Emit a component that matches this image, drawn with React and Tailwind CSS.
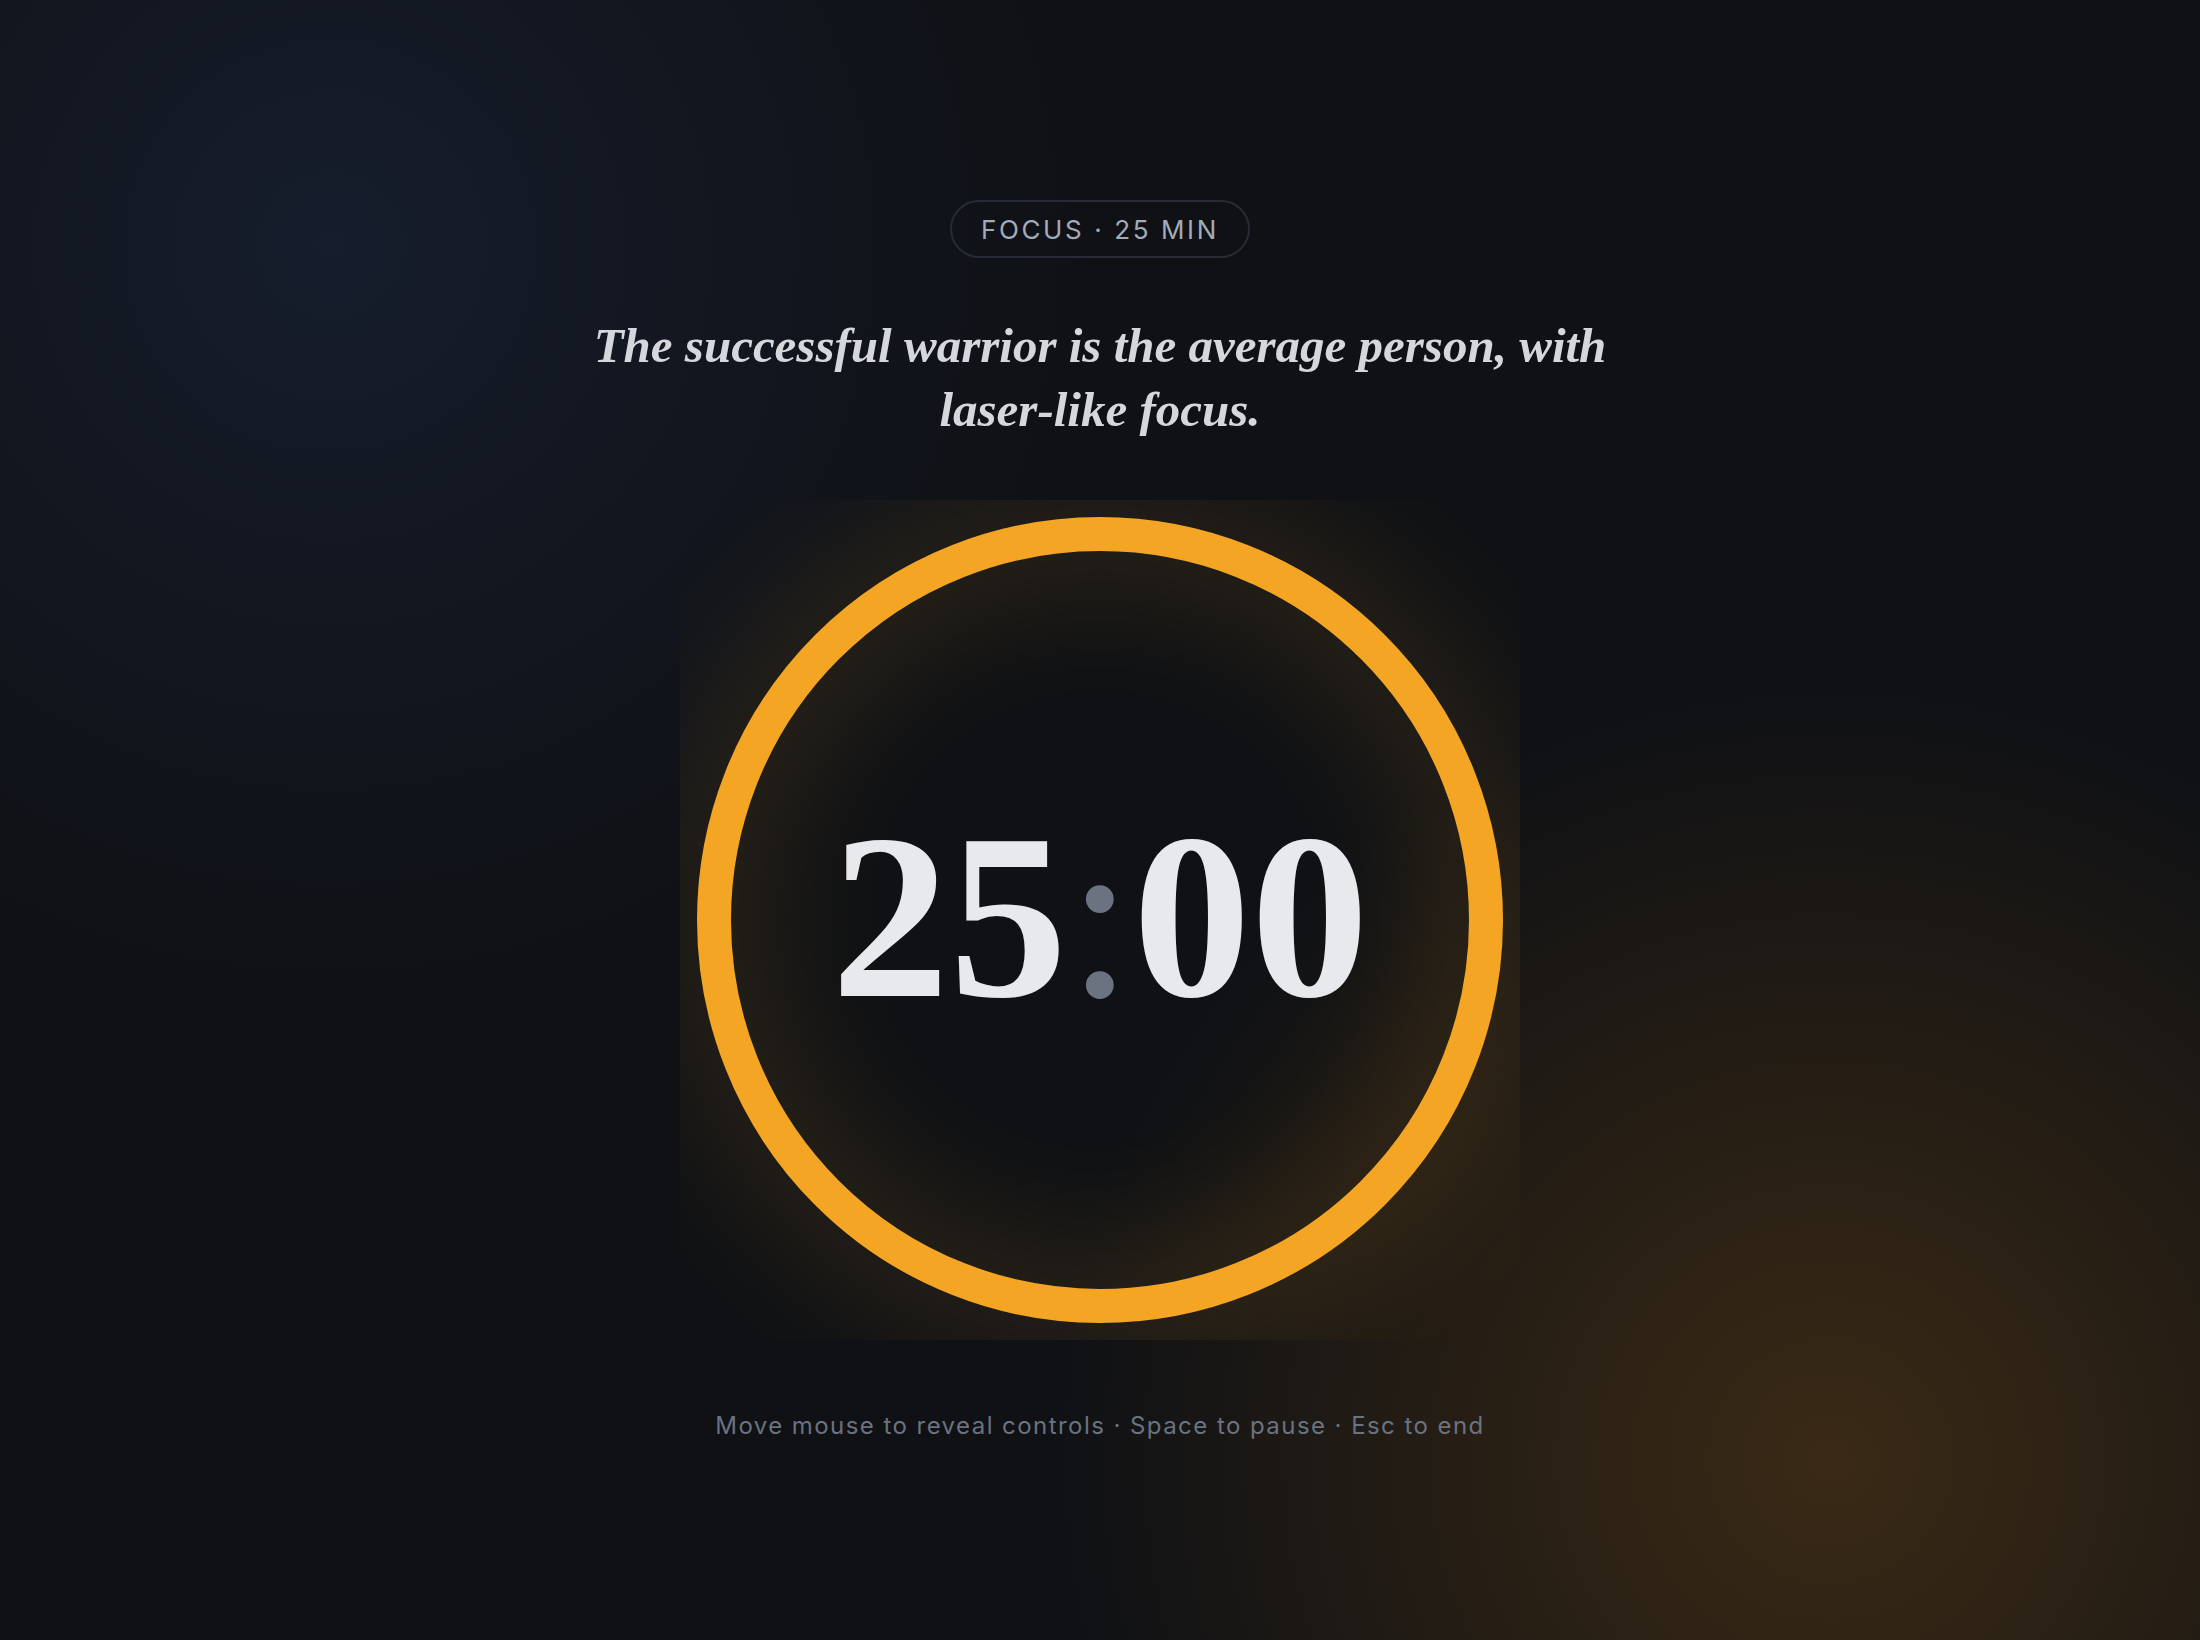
export default function App() {
  return (
    <div className="relative min-h-screen w-full overflow-hidden bg-[#0f1115] font-['Inter','Liberation_Sans',sans-serif]">
      {/* background glows */}
      <div className="pointer-events-none absolute inset-0 bg-[radial-gradient(circle_760px_at_330px_245px,#161d2c_0%,rgba(22,29,44,0.55)_40%,rgba(15,17,21,0)_100%)]" />
      <div className="pointer-events-none absolute inset-0 bg-[radial-gradient(circle_780px_at_1830px_1460px,#3a2a16_0%,rgba(52,38,20,0.7)_40%,rgba(15,17,21,0)_100%)]" />

      <main className="relative flex flex-col items-center pt-[200px]">
        <div className="flex h-[58px] items-center rounded-full border-2 border-[#262b35] px-[29px] text-[26px] uppercase tracking-[0.1em] text-[#a3abb9]">
          Focus · 25 min
        </div>

        <p className="mt-[56px] max-w-[1080px] text-center font-['Liberation_Serif',serif] text-[49px] font-bold italic leading-[64px] text-[#d5d7dd]">
          The successful warrior is the average person, with laser-like focus.
        </p>

        <div className="mt-[58px] grid h-[840px] w-[840px]">
          <svg className="col-start-1 row-start-1" width="840" height="840" viewBox="0 0 840 840">
            <defs>
              <filter id="glow" filterUnits="userSpaceOnUse" x="0" y="0" width="840" height="840">
                <feGaussianBlur stdDeviation="65" />
              </filter>
            </defs>
            <circle cx="420" cy="420" r="386" fill="none" stroke="#f4a524" strokeWidth="80" opacity="0.16" filter="url(#glow)" />
            <circle cx="420" cy="420" r="386" fill="none" stroke="#f4a524" strokeWidth="34" />
          </svg>
          <div className="col-start-1 row-start-1 flex items-center justify-center pb-[6px] font-['Liberation_Serif',serif] text-[236px] font-bold leading-none tracking-[0em] text-[#e8e9ed]">
            <span>25</span>
            <span className="font-normal text-[#6b7280]">:</span>
            <span>00</span>
          </div>
        </div>

        <p className="mt-[68px] text-[24px] tracking-[0.06em] text-[#6b7280]">
          Move mouse to reveal controls · Space to pause · Esc to end
        </p>
      </main>
    </div>
  )
}
